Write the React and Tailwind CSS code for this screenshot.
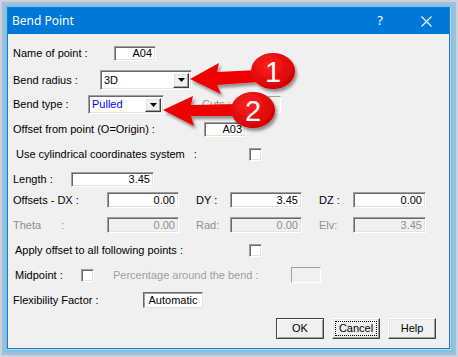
import React from 'react';

const sunken =
  'border border-t-[#a0a0a0] border-l-[#a0a0a0] border-r-[#ffffff] border-b-[#ffffff] shadow-[inset_1px_1px_0_#696969,inset_-1px_-1px_0_#e3e3e3]';
const raised =
  'border border-t-[#ffffff] border-l-[#ffffff] border-r-[#404040] border-b-[#404040] shadow-[inset_-1px_-1px_0_#a0a0a0,inset_1px_1px_0_#e3e3e3]';

const Caret = () => (
  <svg width="7" height="4" viewBox="0 0 7 4">
    <path d="M0 0H7L3.5 4Z" fill="#000" />
  </svg>
);

const Check = () => <div className={`w-[13px] h-[13px] bg-white ${sunken}`} />;

const Annotations = () => (
  <svg className="absolute inset-0 pointer-events-none" width="458" height="357" viewBox="0 0 458 357">
    <defs>
      <radialGradient id="red" cx="40%" cy="35%" r="70%">
        <stop offset="0%" stopColor="#ff2020" />
        <stop offset="100%" stopColor="#d00000" />
      </radialGradient>
      <filter id="shadow" x="-20%" y="-20%" width="150%" height="160%">
        <feDropShadow dx="2" dy="3" stdDeviation="1.5" floodColor="#000" floodOpacity="0.4" />
      </filter>
    </defs>
    <g filter="url(#shadow)">
      {/* arrow 1 */}
      <path d="M190 79 L219 63 L217 72 L258 70 L258 82 L217 85 L221 94 Z" fill="#ee0000" />
      <ellipse cx="273" cy="71" rx="22" ry="18" fill="url(#red)" />
      {/* arrow 2 */}
      <path d="M163 110 L193 96 L191 105 L238 104 L238 116 L191 116 L194 126 Z" fill="#ee0000" />
      <ellipse cx="253" cy="110" rx="22" ry="18" fill="url(#red)" />
    </g>
    <text x="273" y="72" fill="#fff" fontSize="29" textAnchor="middle" dominantBaseline="central" fontFamily="Liberation Sans, Arial, sans-serif">1</text>
    <text x="253" y="111" fill="#fff" fontSize="29" textAnchor="middle" dominantBaseline="central" fontFamily="Liberation Sans, Arial, sans-serif">2</text>
  </svg>
);

export default function App() {
  return (
    <div className="relative w-[458px] h-[357px] overflow-hidden bg-[#cdd2d8] p-[2px]">
      <div className="w-full h-full border-[3px] border-[#9fbfdf]">
        <div className="w-full h-full border-[2px] border-[#78c6e3] bg-[#cdd2d8]">
          <div className="w-[443px] h-[342px] border border-[#1a78d0] bg-[#f0f0f0] flex flex-col">
            {/* Title bar */}
            <div className="h-[26px] bg-[#0078d7] flex items-center pl-[4px] text-white font-['Noto_Sans',sans-serif] text-[12px]">
              <span>Bend Point</span>
              <span className="ml-auto mr-[38px] text-[13px]">?</span>
              <svg className="mr-[17px]" width="11" height="11" viewBox="0 0 11 11">
                <path d="M0.5 0.5L10.5 10.5M10.5 0.5L0.5 10.5" stroke="#fff" strokeWidth="1.1" />
              </svg>
            </div>

            {/* Form */}
            <div className="flex flex-col px-[5px] text-[11px] text-black font-['Liberation_Sans',Arial,sans-serif] leading-none">
              <div className="flex items-center h-[15px] mt-[12px]">
                <span className="w-[101px]">Name of point :</span>
                <div className={`w-[42px] h-[15px] bg-white flex items-center justify-end pr-[3px] ${sunken}`}>A04</div>
              </div>

              <div className="flex items-center h-[20px] mt-[9px]">
                <span className="w-[87px]">Bend radius :</span>
                <div className={`w-[92px] h-[20px] bg-white flex items-center pl-[3px] pr-[2px] ${sunken}`}>
                  <span>3D</span>
                  <div className={`ml-auto w-[16px] h-[15px] bg-[#f0f0f0] flex items-center justify-center ${raised}`}>
                    <Caret />
                  </div>
                </div>
              </div>

              <div className="flex items-center h-[19px] mt-[5px]">
                <span className="w-[75px]">Bend type :</span>
                <div className={`w-[76px] h-[19px] bg-white flex items-center pl-[3px] pr-[2px] ${sunken}`}>
                  <span className="text-[#0000ff]">Pulled</span>
                  <div className={`ml-auto w-[16px] h-[14px] bg-[#f0f0f0] flex items-center justify-center ${raised}`}>
                    <Caret />
                  </div>
                </div>
                <span className="ml-[38px] w-[66px] text-[#8f8f8f]">Cuts :</span>
                <div className="w-[13px] h-[17px] border border-t-[#a0a0a0] border-l-[#a0a0a0] border-r-white border-b-white" />
              </div>

              <div className="flex items-center h-[15px] mt-[8px]">
                <span className="w-[191px]">Offset from point (O=Origin) :</span>
                <div className={`w-[42px] h-[15px] bg-white flex items-center justify-end pr-[3px] ${sunken}`}>A03</div>
              </div>

              <div className="flex items-center h-[13px] mt-[11px] pl-[3px]">
                <span className="w-[233px]">
                  Use cylindrical coordinates system<span className="ml-[9px]">:</span>
                </span>
                <Check />
              </div>

              <div className="flex items-center h-[15px] mt-[11px]">
                <span className="w-[58px]">Length :</span>
                <div className={`w-[83px] h-[15px] bg-white flex items-center justify-end pr-[3px] ${sunken}`}>3.45</div>
              </div>

              <div className="flex items-center h-[16px] mt-[5px]">
                <span className="w-[94px]">Offsets - DX :</span>
                <div className={`w-[72px] h-[16px] bg-white flex items-center justify-end pr-[3px] ${sunken}`}>0.00</div>
                <span className="ml-[17px] w-[34px]">DY :</span>
                <div className={`w-[72px] h-[16px] bg-white flex items-center justify-end pr-[3px] ${sunken}`}>3.45</div>
                <span className="ml-[17px] w-[34px]">DZ :</span>
                <div className={`w-[73px] h-[16px] bg-white flex items-center justify-end pr-[3px] ${sunken}`}>0.00</div>
              </div>

              <div className="flex items-center h-[16px] mt-[9px] text-[#8f8f8f]">
                <span className="w-[94px]">
                  Theta<span className="ml-[20px]">:</span>
                </span>
                <div className={`w-[72px] h-[16px] bg-[#f0f0f0] flex items-center justify-end pr-[3px] ${sunken}`}>0.00</div>
                <span className="ml-[17px] w-[34px]">Rad:</span>
                <div className={`w-[72px] h-[16px] bg-[#f0f0f0] flex items-center justify-end pr-[3px] ${sunken}`}>0.00</div>
                <span className="ml-[17px] w-[34px]">Elv:</span>
                <div className={`w-[73px] h-[16px] bg-[#f0f0f0] flex items-center justify-end pr-[3px] ${sunken}`}>3.45</div>
              </div>

              <div className="flex items-center h-[13px] mt-[11px] pl-[2px]">
                <span className="w-[234px]">Apply offset to all following points :</span>
                <Check />
              </div>

              <div className="flex items-center h-[16px] mt-[10px] pl-[2px]">
                <span className="w-[66px]">Midpoint :</span>
                <Check />
                <span className="ml-[19px] w-[178px] text-[#a0a0a0]">Percentage around the bend :</span>
                <div className="w-[30px] h-[16px] border border-t-[#a0a0a0] border-l-[#a0a0a0] border-r-white border-b-white" />
              </div>

              <div className="flex items-center h-[16px] mt-[9px]">
                <span className="w-[130px]">Flexibility Factor :</span>
                <div className="w-[60px] h-[16px] bg-white flex items-center justify-center border border-t-[#696969] border-l-[#696969] border-r-[#e3e3e3] border-b-[#e3e3e3] shadow-[inset_1px_1px_0_#a0a0a0]">
                  Automatic
                </div>
              </div>

              <div className="flex items-center justify-end gap-[8px] h-[21px] mt-[10px] mr-[8px]">
                <button className="w-[48px] h-[21px] bg-[#f0f0f0] border border-[#404040] shadow-[inset_1px_1px_0_#ffffff,inset_-1px_-1px_0_#a0a0a0]">
                  OK
                </button>
                <button className={`w-[48px] h-[21px] bg-[#f0f0f0] flex items-center justify-center ${raised}`}>
                  <span className="w-[42px] h-[15px] flex items-center justify-center border border-dotted border-black">Cancel</span>
                </button>
                <button className={`w-[48px] h-[21px] bg-[#f0f0f0] ${raised}`}>Help</button>
              </div>
            </div>
          </div>
        </div>
      </div>
      <Annotations />
    </div>
  );
}
